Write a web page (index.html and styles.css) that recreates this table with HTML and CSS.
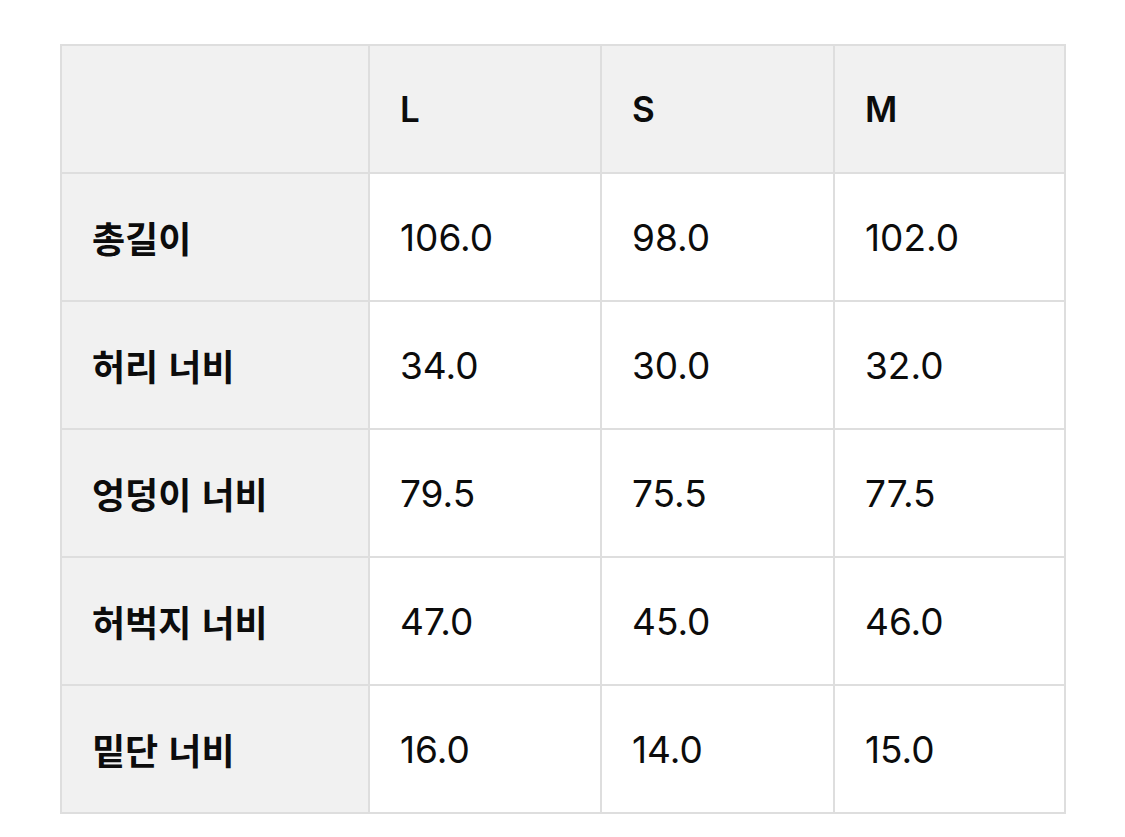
FILE: index.html
```html
<!DOCTYPE html>
<html lang="ko">
<head>
<meta charset="utf-8">
<link rel="stylesheet" href="styles.css">
</head>
<body>
<table class="size-table">
  <colgroup>
    <col class="c0"><col class="c1"><col class="c2"><col class="c3">
  </colgroup>
  <thead>
    <tr><th class="label"></th><th>L</th><th>S</th><th>M</th></tr>
  </thead>
  <tbody>
    <tr><th class="label">총길이</th><td>106.0</td><td>98.0</td><td>102.0</td></tr>
    <tr><th class="label">허리 너비</th><td>34.0</td><td>30.0</td><td>32.0</td></tr>
    <tr><th class="label">엉덩이 너비</th><td>79.5</td><td>75.5</td><td>77.5</td></tr>
    <tr><th class="label">허벅지 너비</th><td>47.0</td><td>45.0</td><td>46.0</td></tr>
    <tr><th class="label">밑단 너비</th><td>16.0</td><td>14.0</td><td>15.0</td></tr>
  </tbody>
</table>
</body>
</html>
```
FILE: styles.css
```css
html, body {
  margin: 0;
  padding: 0;
  background: #ffffff;
}
body {
  padding: 44px 0 0 60px;
  font-family: Inter, "Noto Sans CJK KR", sans-serif;
  color: #0c0c0c;
}
.size-table {
  border-collapse: collapse;
  table-layout: fixed;
  width: 1004px;
}
.c0 { width: 308px; }
.c1 { width: 232px; }
.c2 { width: 233px; }
.c3 { width: 231px; }
.size-table th,
.size-table td {
  border: 2px solid #dedede;
  height: 128px;
  padding: 0 0 0 30px;
  text-align: left;
  vertical-align: middle;
  font-size: 37px;
  line-height: 1;
  box-sizing: border-box;
}
.size-table thead th {
  background: #f1f1f1;
  font-weight: 600;
  font-size: 35px;
}
.size-table th.label {
  background: #f1f1f1;
  font-weight: 700;
  font-size: 36px;
  font-family: "Noto Sans CJK KR", Inter, sans-serif;
}
.size-table td {
  font-weight: 400;
  background: #ffffff;
}
```
